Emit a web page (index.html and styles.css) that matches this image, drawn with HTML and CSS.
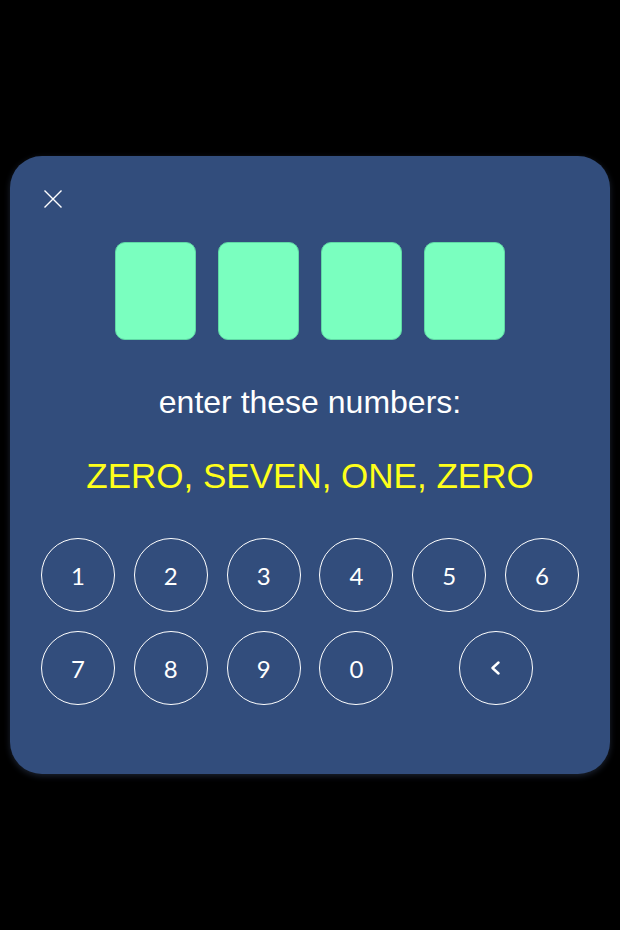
FILE: index.html
```html
<!DOCTYPE html>
<html>
<head>
<meta charset="utf-8">
<link rel="stylesheet" href="styles.css">
</head>
<body>
<div class="card">
  <div class="top">
    <button class="close" aria-label="close">
      <svg width="20" height="20" viewBox="0 0 20 20"><path d="M1.5 1.5 L18.5 18.5 M18.5 1.5 L1.5 18.5" stroke="#fff" stroke-width="1.4" fill="none"/></svg>
    </button>
  </div>
  <div class="boxes">
    <div class="box"></div>
    <div class="box"></div>
    <div class="box"></div>
    <div class="box"></div>
  </div>
  <p class="prompt">enter these numbers:</p>
  <p class="code">ZERO, SEVEN, ONE, ZERO</p>
  <div class="keypad">
    <div class="row">
      <button class="key">1</button>
      <button class="key">2</button>
      <button class="key">3</button>
      <button class="key">4</button>
      <button class="key">5</button>
      <button class="key">6</button>
    </div>
    <div class="row">
      <button class="key">7</button>
      <button class="key">8</button>
      <button class="key">9</button>
      <button class="key">0</button>
      <button class="key back" aria-label="backspace">
        <svg width="12" height="14" viewBox="0 0 12 14"><path d="M9.5 1.5 L3.5 7 L9.5 12.5" stroke="#fff" stroke-width="2.4" fill="none" stroke-linecap="round" stroke-linejoin="round"/></svg>
      </button>
    </div>
  </div>
</div>
</body>
</html>
```
FILE: styles.css
```css
html, body {
  margin: 0;
  padding: 0;
  background: #000;
  height: 100%;
}
body {
  display: flex;
  align-items: center;
  justify-content: center;
  font-family: "Liberation Sans", Arial, sans-serif;
}
.card {
  width: 600px;
  height: 618px;
  box-sizing: border-box;
  background: #324d7c;
  border-radius: 32px;
  box-shadow: 0 2px 6px rgba(80, 100, 140, 0.35);
  padding: 33px 0 0 0;
  display: flex;
  flex-direction: column;
  align-items: center;
}
.top {
  align-self: stretch;
  padding-left: 33px;
  height: 20px;
}
.close {
  background: none;
  border: 0;
  padding: 0;
  width: 20px;
  height: 20px;
  display: block;
}
.close svg { display: block; }
.boxes {
  display: flex;
  gap: 21.7px;
  margin-top: 33px;
}
.box {
  width: 81px;
  height: 98px;
  box-sizing: border-box;
  background: #7affbf;
  border: 1px solid #5fd8a5;
  border-radius: 10px;
}
.prompt {
  margin: 43px 0 0 0;
  color: #fff;
  font-size: 32px;
  line-height: 38px;
}
.code {
  margin: 35px 0 0 0;
  color: #ffff1a;
  font-size: 35px;
  line-height: 40px;
}
.keypad {
  margin-top: 42px;
  display: flex;
  flex-direction: column;
  gap: 19px;
  width: 538px;
}
.row {
  display: flex;
  gap: 18.8px;
}
.key {
  width: 74px;
  height: 74px;
  box-sizing: border-box;
  border-radius: 50%;
  border: 1.3px solid #fff;
  background: transparent;
  color: #fff;
  font-family: "Lato", "Noto Sans", sans-serif;
  font-size: 24px;
  padding: 0;
  display: flex;
  align-items: center;
  justify-content: center;
}
.key svg { display: block; }
.back {
  margin-left: 47px;
  padding-right: 3px;
}
```
